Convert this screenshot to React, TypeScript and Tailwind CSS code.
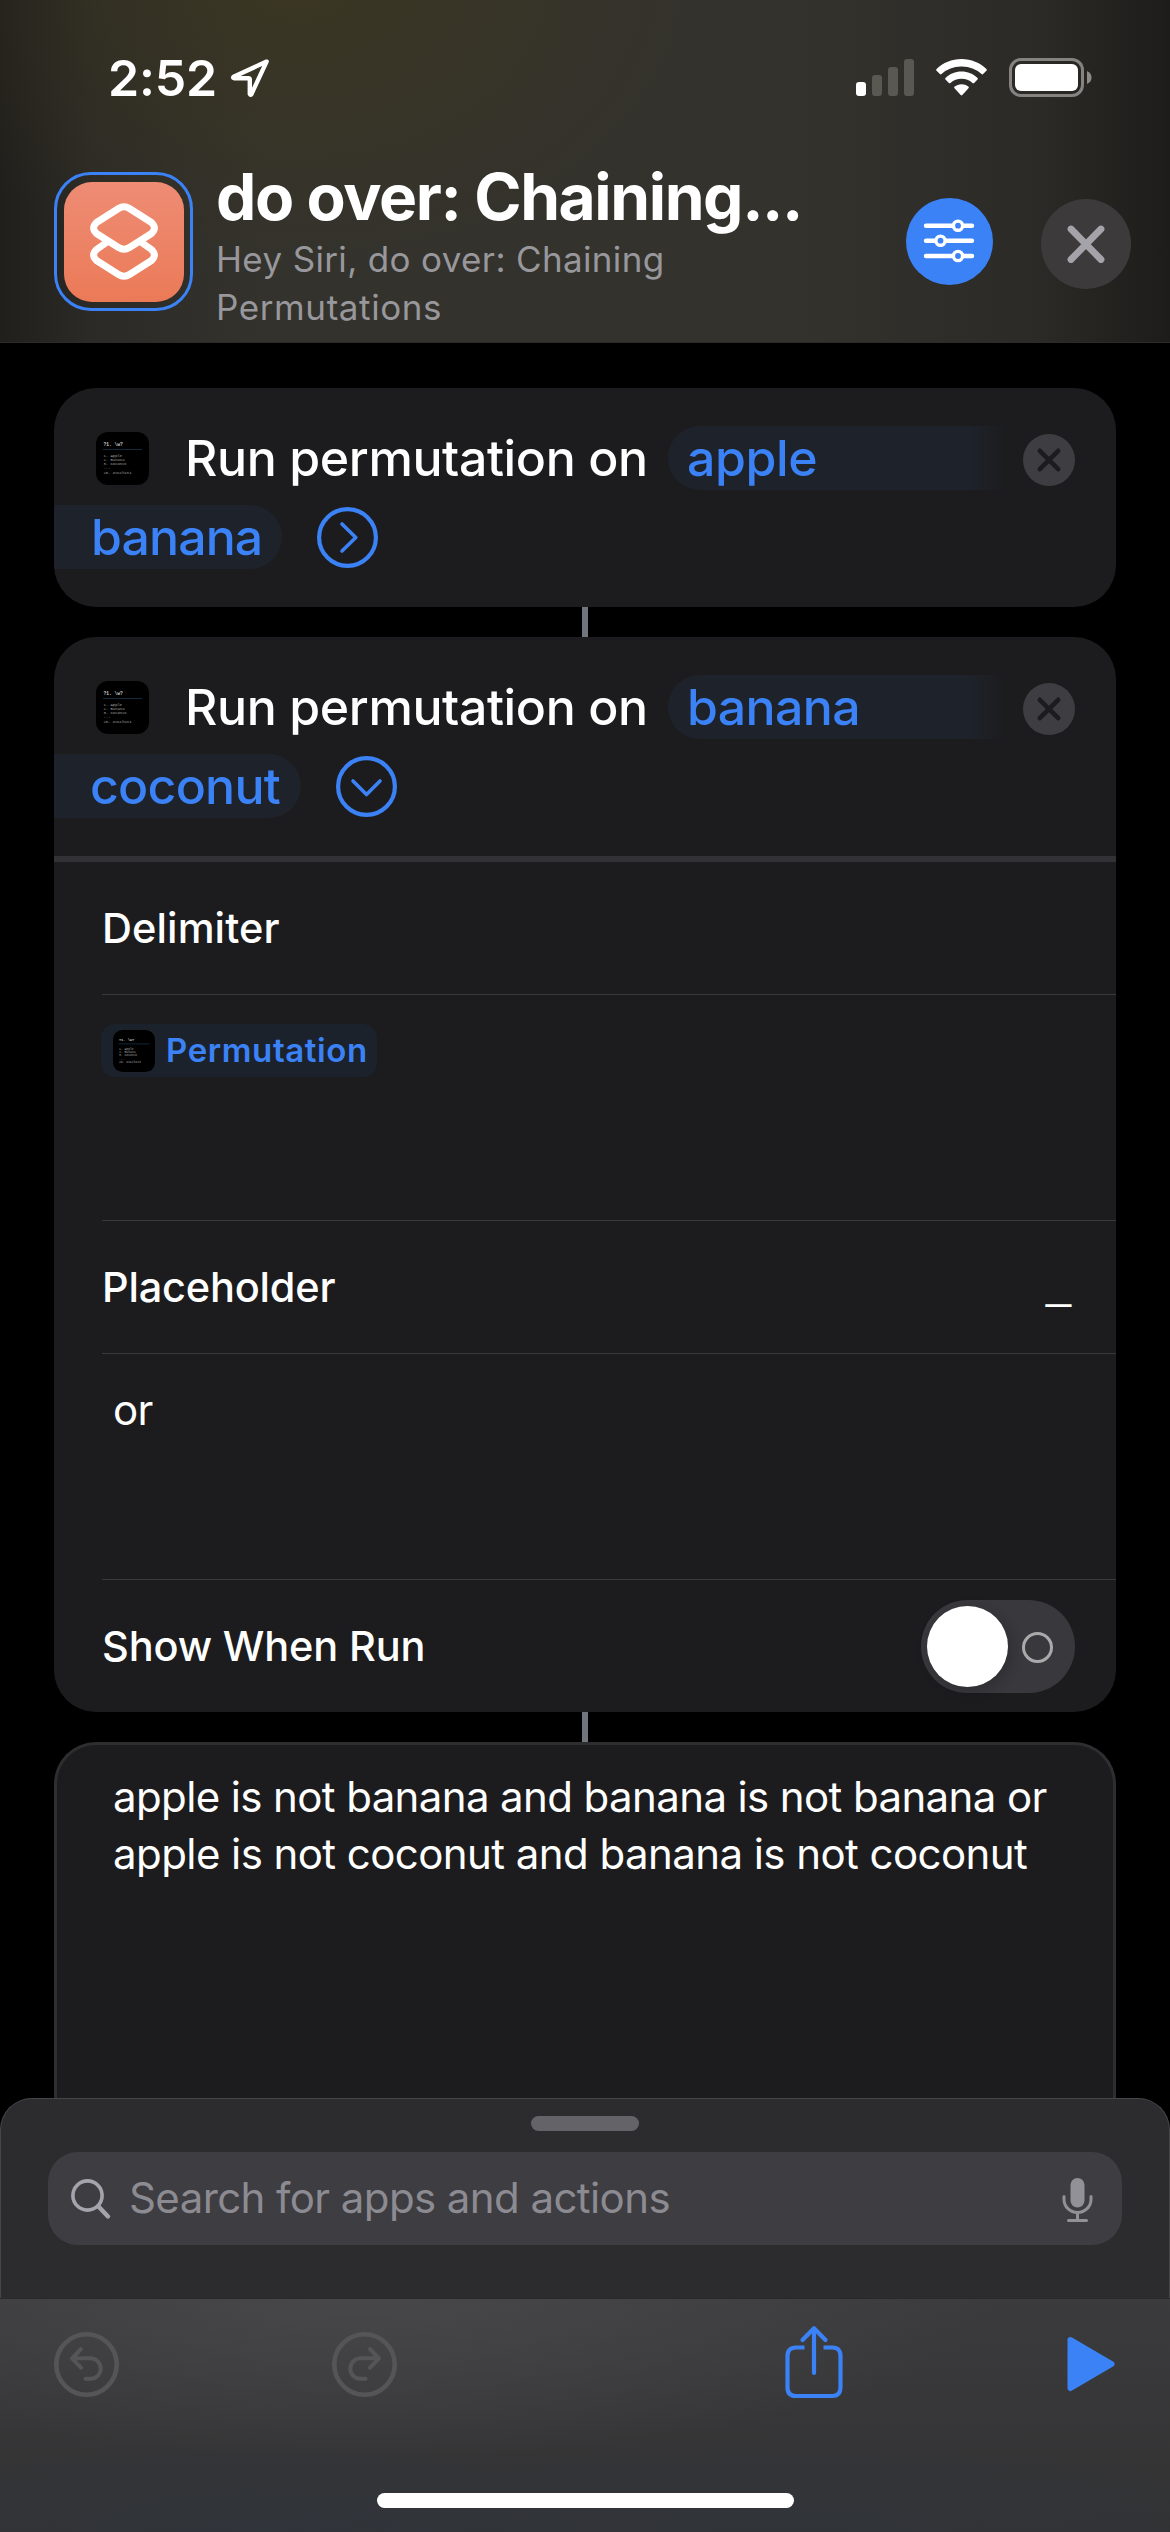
import type { ReactNode } from "react";

function MiniIcon({ className }: { className: string }) {
  return (
    <svg viewBox="0 0 53 53" className={className} fontFamily="Liberation Mono">
      <rect width="53" height="53" rx="12" fill="#000" />
      <text x="7.5" y="14" fontSize="4.6" fontWeight="bold" fill="#d0d0d0">?1. \w?</text>
      <path d="M7 17.5h39" stroke="#12293b" strokeWidth="1.2" />
      <g fontSize="3.9" fill="#a0a0a0">
        <text x="7.5" y="24.8">1. Apple</text>
        <text x="7.5" y="29">2. Banana</text>
        <text x="7.5" y="33.4">3. Coconut</text>
        <text x="7.5" y="37.4">...</text>
        <text x="7.5" y="42">26. Zucchini</text>
      </g>
    </svg>
  );
}

function StatusBar() {
  return (
    <div className="flex h-[156px] items-start pl-[108px] pr-[78px] pt-[58px]">
      <span className="h-[40px] w-[122px] whitespace-nowrap text-[50px] font-semibold leading-[40px] tracking-[-0.2px] text-white">2:52</span>
      <svg viewBox="0 0 40 40" className="h-[40px] w-[40px]" fill="none">
        <path d="M36.6 3.6L3.6 18.8q-1.2 1 .4 1.4H18.4q1.4 0 1.4 1.4V36q.6 1.6 1.6.2Z" stroke="#fff" strokeWidth="4.4" strokeLinejoin="round" />
      </svg>
      <div className="ml-auto flex">
        <svg viewBox="0 0 58 40" className="mr-[22px] h-[40px] w-[58px]">
          <rect x="0" y="24" width="10" height="14" rx="3" fill="#fff" />
          <rect x="16" y="17" width="10" height="21" rx="3" fill="#5a5853" />
          <rect x="32" y="9" width="10" height="29" rx="3" fill="#5a5853" />
          <rect x="48" y="1" width="10" height="37" rx="3" fill="#5a5853" />
        </svg>
        <svg viewBox="0 0 51 40" className="mr-[22px] h-[40px] w-[51px]" fill="#fff">
          <path d="M25.500 1C15.800 1 7 4.800.6 11q-.9.900 0 1.800l3.300 3.300q.8.700 1.600 0A29 29 0 0 1 25.500 8.600a29 29 0 0 1 20 7.500q.8.700 1.600 0l3.300-3.300q.9-.9 0-1.800C44 4.800 35.200 1 25.500 1Z" />
          <path d="M25.500 13.500c-6.200 0-11.800 2.400-16 6.400q-.9.900 0 1.700l3.400 3.400q.8.700 1.600 0a16.500 16.500 0 0 1 22 0q.8.700 1.600 0l3.400-3.400q.9-.8 0-1.700c-4.200-4-9.800-6.400-16-6.400Z" />
          <path d="M25.500 26.200c-2.600 0-5 .9-6.900 2.400q-.9.800-.1 1.600l6.200 6.900q.8.700 1.600 0l6.200-6.900q.8-.8-.1-1.600a11 11 0 0 0-6.900-2.400Z" />
        </svg>
        <svg viewBox="0 0 83 40" className="h-[40px] w-[83px]">
          <rect x="1.500" y="1.500" width="72" height="36" rx="10.500" fill="none" stroke="#85837f" strokeWidth="3" />
          <rect x="6" y="6" width="63" height="27" rx="6" fill="#fff" />
          <path d="M78 13q4.500 2 4.500 6.500T78 26Z" fill="#8d8b87" />
        </svg>
      </div>
    </div>
  );
}

function Header() {
  return (
    <header className="h-[343px] w-full shrink-0 border-b border-[#2b2b2a] bg-[radial-gradient(420px_300px_at_300px_-20px,rgba(62,56,30,0.7),transparent),linear-gradient(90deg,#201f1c_0px,#2b2a26_90px,#33322d_260px,#33322d_800px,#2b2a26_1040px,#1d1c1a_1170px)]">
      <StatusBar />
      <div className="flex pl-[54px]">
        <div className="mt-[16px] flex h-[139px] w-[139px] items-center justify-center rounded-[37px] border-[3px] border-[#3b82f6]">
          <div className="flex h-[120px] w-[120px] items-center justify-center rounded-[28px] bg-linear-to-b from-[#ee8c74] to-[#eb7a57]">
            <svg viewBox="0 0 68 77" className="h-[77px] w-[68px]" fill="none" stroke="#fff" strokeWidth="7" strokeLinejoin="round">
              <path d="M28.500 5.500L6.500 19.500Q.7 25 6.500 30.500L28.500 44.500Q34 48 39.500 44.500L61.500 30.500Q67.300 25 61.500 19.500L39.500 5.500Q34 2 28.500 5.500Z" />
              <path d="M16.500 39.500L6.500 46.500Q.7 52 6.500 57.500L28.500 71.500Q34 75 39.500 71.500L61.500 57.500Q67.300 52 61.500 46.500L51.500 39.500" />
            </svg>
          </div>
        </div>
        <div className="ml-[23px] w-[690px]">
          <h1 className="mt-[8px] whitespace-nowrap text-[64px] font-bold leading-[66px] tracking-[-1.4px] text-white">do over: Chaining...</h1>
          <p className="mt-[5px] text-[35px] leading-[48px] text-[#98979b]">
            <span className="block tracking-[0.35px]">Hey Siri, do over: Chaining</span>
            <span className="block tracking-[0.6px]">Permutations</span>
          </p>
        </div>
        <svg viewBox="0 0 87 87" className="mt-[42px] h-[87px] w-[87px]" fill="none" stroke="#fff">
          <circle cx="43.500" cy="43.500" r="43.500" fill="#3b82f6" stroke="none" />
          <path d="M20 27.700h46M20 42.700h46M20 58h46" strokeWidth="4.400" strokeLinecap="round" />
          <g fill="#3b82f6" strokeWidth="3.400">
            <circle cx="52" cy="27.700" r="4.600" />
            <circle cx="34.500" cy="42.700" r="4.600" />
            <circle cx="52" cy="58" r="4.600" />
          </g>
        </svg>
        <svg viewBox="0 0 90 90" className="ml-[48px] mt-[43px] h-[90px] w-[90px]">
          <circle cx="45" cy="45" r="45" fill="#3c3a3b" />
          <path d="M30 30L60 60.500M60 30L30 60.500" stroke="#a5a3aa" strokeWidth="6.800" strokeLinecap="round" />
        </svg>
      </div>
    </header>
  );
}

function Connector() {
  return <div className="mx-auto h-[30px] w-[6px] shrink-0 bg-[#71757d]" />;
}

function ActionTop({ first, second, firstClass, secondClass, open }: { first: string; second: string; firstClass: string; secondClass: string; open: boolean }) {
  return (
    <div className="h-[219px] pt-[38px]">
      <div className="flex h-[64px] items-center">
        <MiniIcon className="ml-[42px] h-[53px] w-[53px]" />
        <span className="ml-[36px] w-[483px] whitespace-nowrap text-[50px] font-medium leading-[64px] tracking-[-0.39px] text-white">Run permutation on</span>
        <span className={"h-[64px] w-[338px] whitespace-nowrap rounded-l-[32px] bg-linear-to-r from-[#1e222a] from-[302px] to-[#1c1c1e] text-[50px] font-medium leading-[64px] text-[#3b82f6] " + firstClass}>{first}</span>
        <svg viewBox="0 0 52 52" className="ml-[17px] mt-[4px] h-[52px] w-[52px]">
          <circle cx="26" cy="26" r="26" fill="#3e3d41" />
          <path d="M16.800 16.800l18.400 18.400M35.200 16.800L16.800 35.200" stroke="#1c1c1e" strokeWidth="4.600" strokeLinecap="round" />
        </svg>
      </div>
      <div className="mt-[15px] flex h-[64px] items-center">
        <span className={"h-[64px] whitespace-nowrap rounded-r-[32px] bg-[#1e222a] text-[50px] font-medium leading-[64px] text-[#3b82f6] " + secondClass}>{second}</span>
        <svg viewBox="0 0 61 61" className="ml-[35px] h-[61px] w-[61px]" fill="none" stroke="#3b82f6" strokeLinecap="round" strokeLinejoin="round">
          <circle cx="30.500" cy="30.500" r="28.400" strokeWidth="4.200" />
          <path d={open ? "M17 25l13.500 13.500L44 25" : "M25 17l13.800 13.500L25 44"} strokeWidth="3.600" />
        </svg>
      </div>
    </div>
  );
}

function Row({ children }: { children: ReactNode }) {
  return <div className="ml-[48px] flex h-[133px] items-center justify-between border-b border-[#39393b] text-[41.5px] font-medium text-white">{children}</div>;
}

function UndoIcon({ className }: { className: string }) {
  return (
    <svg viewBox="0 0 65 65" className={className} fill="none" stroke="#555557" strokeLinecap="round" strokeLinejoin="round">
      <circle cx="32.500" cy="32.500" r="30.200" strokeWidth="4.600" />
      <path d="M27 17L18 26.300L27 35.700M18 26.300H36.500A10 10 0 0 1 36.500 46.800H31.500" strokeWidth="4" />
    </svg>
  );
}

export default function App() {
  return (
    <div className="flex h-[2532px] w-[1170px] flex-col overflow-hidden bg-black font-['Inter',sans-serif]">
      <Header />
      <main className="flex flex-1 flex-col px-[54px] pt-[45px]">
        <section className="overflow-hidden rounded-[42px] bg-[#1c1c1e]">
          <ActionTop first="apple" second="banana" firstClass="pl-[19px] tracking-[-0.4px]" secondClass="w-[228px] pl-[37px] tracking-[-0.9px]" open={false} />
        </section>
        <Connector />
        <section className="overflow-hidden rounded-[42px] bg-[#1c1c1e]">
          <ActionTop first="banana" second="coconut" firstClass="pl-[19px] tracking-[-0.6px]" secondClass="w-[247px] pl-[36px] tracking-[-0.75px]" open />
          <div className="h-[6px] bg-[#323236]" />
          <Row><span className="tracking-[0.1px]">Delimiter</span></Row>
          <div className="ml-[48px] h-[226px] border-b border-[#39393b] pt-[29px]">
            <div className="-ml-[1px] flex h-[53px] w-[276px] items-center rounded-[14px] bg-[#1c222b] pl-[12px]">
              <MiniIcon className="h-[42px] w-[42px]" />
              <span className="ml-[11px] whitespace-nowrap text-[33px] font-semibold leading-[53px] tracking-[0.6px] text-[#3b82f6]">Permutation</span>
            </div>
          </div>
          <Row>
            <span className="tracking-[-0.2px]">Placeholder</span>
            <span className="mr-[45px] -translate-y-[4px] font-['Liberation_Sans',sans-serif] text-[45px] font-normal">_</span>
          </Row>
          <div className="ml-[48px] h-[226px] border-b border-[#39393b] pl-[11px] pt-[28px] text-[42px] leading-[56px] tracking-[-0.6px] text-white">or</div>
          <div className="flex h-[132px] items-center pl-[48px] text-[41.500px] font-medium tracking-[-0.16px] text-white">
            <span>Show When Run</span>
            <div className="ml-auto mr-[41px] flex h-[93px] w-[154px] items-center rounded-full bg-[#39393d] pl-[6px]">
              <div className="h-[81px] w-[81px] rounded-full bg-white shadow-[3px_4px_14px_rgba(0,0,0,0.2)]" />
              <div className="ml-[14px] mt-[3px] h-[31px] w-[31px] rounded-full border-[3px] border-[#aaaaab]" />
            </div>
          </div>
        </section>
        <Connector />
        <section className="flex-1 rounded-t-[42px] border-x-[3px] border-t-[3px] border-[#2e2e30] bg-[#1c1c1e] pl-[56px] pt-[23px] text-[42px] leading-[57px] text-white">
          <p className="whitespace-nowrap tracking-[-0.62px]">apple is not banana and banana is not banana or</p>
          <p className="whitespace-nowrap tracking-[-0.57px]">apple is not coconut and banana is not coconut</p>
        </section>
      </main>
      <div className="flex h-[200px] shrink-0 flex-col items-center rounded-t-[32px] border-x border-t border-[#464649] bg-[#2c2c2e] pt-[17px]">
        <div className="h-[15px] w-[108px] rounded-full bg-[#646367]" />
        <div className="mt-[21px] flex h-[93px] w-[1074px] items-center rounded-[30px] bg-[#3e3d42] pl-[22px] pr-[29px]">
          <svg viewBox="0 0 42 42" className="h-[42px] w-[42px]" fill="none" stroke="#a5a4ad" strokeLinecap="round">
            <circle cx="17.500" cy="17.500" r="14.600" strokeWidth="3.600" />
            <path d="M28.500 28.500l9.500 10" strokeWidth="4.400" />
          </svg>
          <span className="mb-[2px] ml-[17px] whitespace-nowrap text-[42px] tracking-[-0.59px] text-[#8c8b91]">Search for apps and actions</span>
          <svg viewBox="0 0 31 46" className="ml-auto mt-[2px] h-[46px] w-[31px]" fill="none" stroke="#929197" strokeWidth="3" strokeLinecap="round">
            <rect x="8.500" y="1" width="14" height="29.500" rx="7" fill="#929197" stroke="none" />
            <path d="M2 19.500v3a13.500 13 0 0 0 27 0v-3M15.500 36v7M6.500 43.500h18" />
          </svg>
        </div>
      </div>
      <footer className="flex h-[234px] shrink-0 flex-col items-center border-t border-[#29292a] bg-[radial-gradient(420px_90px_at_260px_234px,rgba(46,54,64,0.6),transparent),radial-gradient(500px_90px_at_780px_234px,rgba(46,54,64,0.5),transparent),radial-gradient(640px_170px_at_360px_-10px,#48484a,rgba(66,66,68,0)),linear-gradient(180deg,#3b3b3d,#323233)]">
        <div className="flex h-[194px] w-full pl-[54px]">
          <UndoIcon className="mt-[33px] h-[65px] w-[65px]" />
          <UndoIcon className="ml-[213px] mt-[33px] h-[65px] w-[65px] -scale-x-100" />
          <svg viewBox="0 0 58 74" className="ml-[388px] mt-[26px] h-[74px] w-[58px]" fill="none" stroke="#3b82f6" strokeWidth="4.200" strokeLinecap="round" strokeLinejoin="round">
            <path d="M19.500 22.500H11Q2.500 22.500 2.500 31V62.500Q2.500 71 11 71H47.500Q55.500 71 55.500 62.500V31Q55.500 22.500 47.500 22.500H38.500" strokeLinecap="butt" />
            <path d="M29 48V3.500M17.500 15L29 3.200L40.500 15" />
          </svg>
          <svg viewBox="0 0 50 58" className="ml-[223px] mt-[36px] h-[58px] w-[50px]" fill="#3b82f6" stroke="#3b82f6" strokeWidth="6" strokeLinejoin="round">
            <path d="M4.500 5L45.500 29L4.500 53Z" />
          </svg>
        </div>
        <div className="h-[15px] w-[417px] rounded-full bg-white" />
      </footer>
    </div>
  );
}
